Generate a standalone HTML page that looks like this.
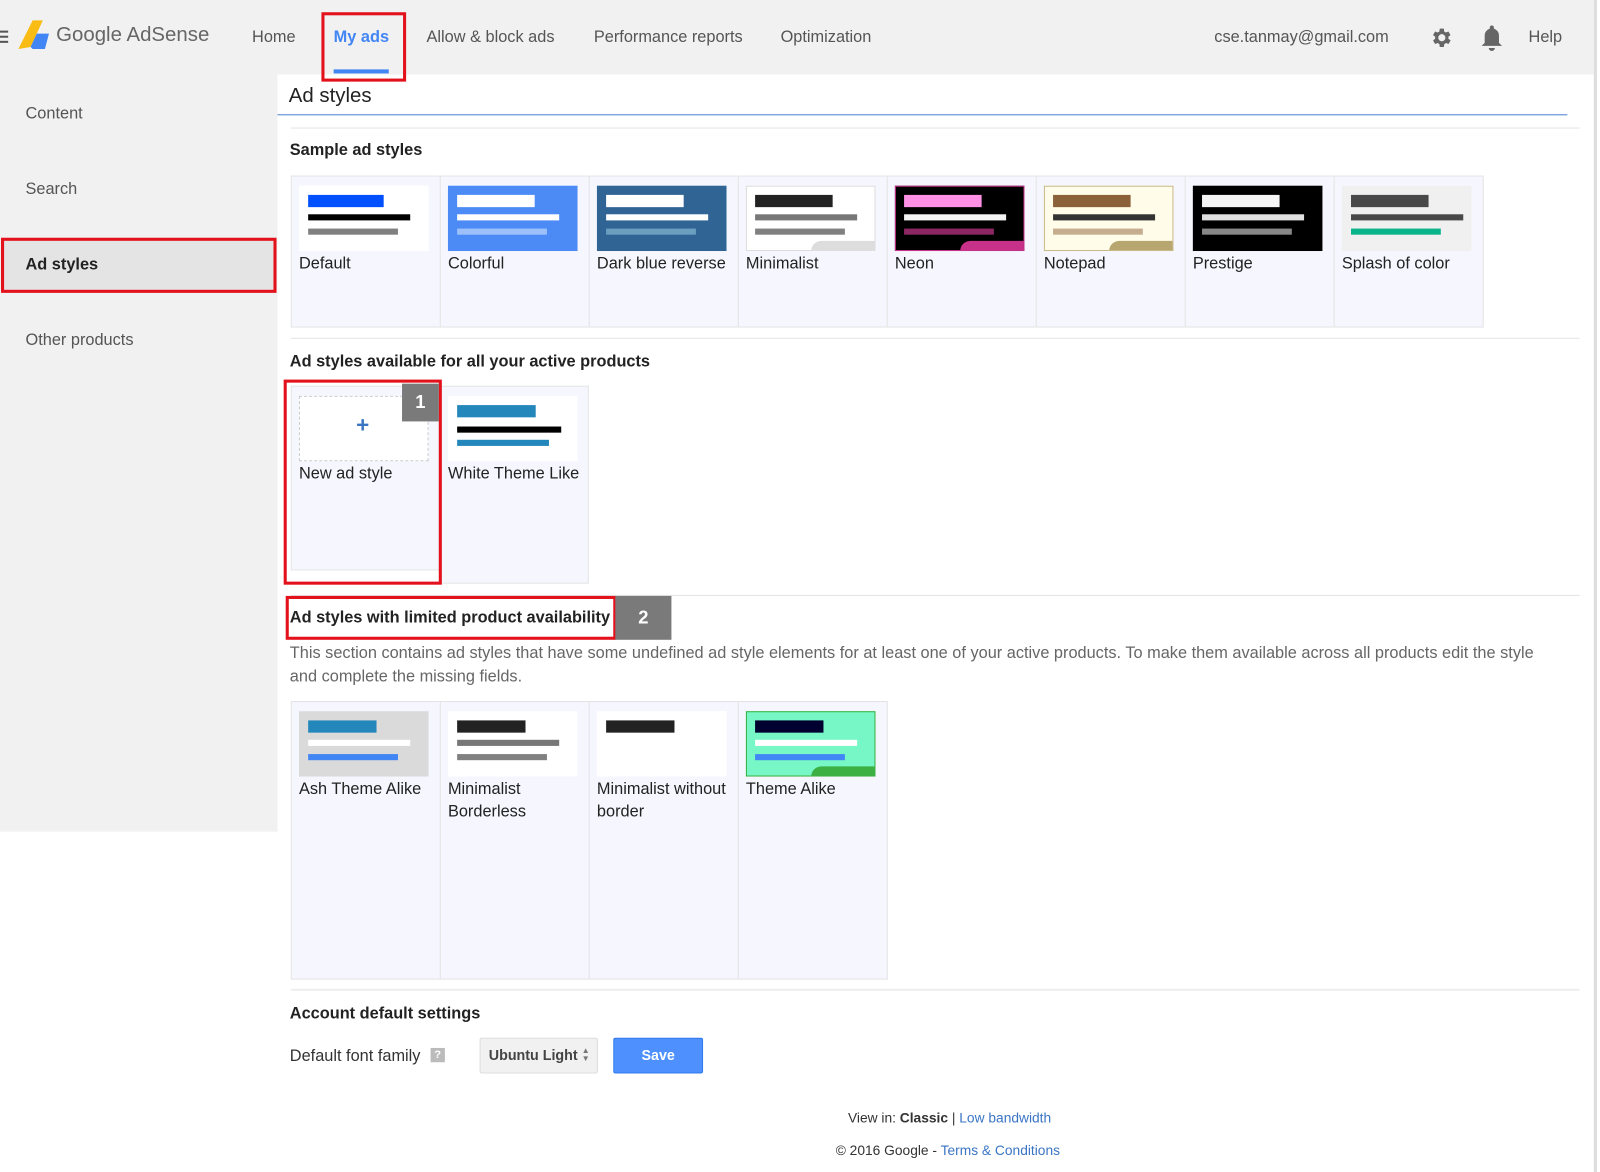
<!DOCTYPE html>
<html><head><meta charset="utf-8">
<style>
*{margin:0;padding:0;box-sizing:border-box}
html,body{width:1600px;height:1172px;overflow:hidden;background:#fff;font-family:"Liberation Sans",Arial,sans-serif}
#w{position:absolute;left:0;top:0;width:1568px;height:1149px;transform:scale(1.0204);transform-origin:0 0}
.a{position:absolute}
.t{position:absolute;white-space:nowrap}
.nav{font-size:16px;color:#555;top:28px}
.side{font-size:16px;color:#555;left:25px}
.card{position:absolute;background:#f6f7fe;border:1px solid #e4e4e4}
.th{position:absolute;left:7px;top:9px;width:127px;height:64px;overflow:hidden}
.b{position:absolute}
.lbl{position:absolute;left:7px;top:75px;font-size:16px;color:#222;line-height:22px}
.h{font-size:16px;font-weight:bold;color:#222}
.hr{position:absolute;height:1px;background:#e4e4e4}
</style></head><body><div id="w">
<!-- header -->
<div class="a" style="left:0;top:0;width:1562px;height:73px;background:#f1f1f1"></div>
<div class="a" style="left:0;top:30px;width:8px;height:2px;background:#555"></div>
<div class="a" style="left:0;top:35px;width:8px;height:2px;background:#555"></div>
<div class="a" style="left:0;top:40px;width:8px;height:2px;background:#555"></div>
<svg class="a" style="left:16px;top:18px" width="34" height="32" viewBox="0 0 34 32"><path d="M2 30 L16 2 L26 2 L14 28 Z" fill="#f9bc15"/><path d="M14 28 L20 15 L32 15 L28 30 L16 30 Z" fill="#4285f4"/></svg>
<div class="t" style="left:55px;top:23px;font-size:20px;color:#666">Google AdSense</div>
<div class="t nav" style="left:247px">Home</div>
<div class="t nav" style="left:327px;color:#4285f4;font-weight:bold">My ads</div>
<div class="a" style="left:327px;top:68px;width:54px;height:4px;background:#4285f4"></div>
<div class="a" style="left:315px;top:12px;width:83px;height:68px;border:3px solid #e3111b"></div>
<div class="t nav" style="left:418px">Allow &amp; block ads</div>
<div class="t nav" style="left:582px">Performance reports</div>
<div class="t nav" style="left:765px">Optimization</div>
<div class="t nav" style="left:1190px">cse.tanmay@gmail.com</div>
<svg class="a" style="left:1401px;top:25px" width="24" height="24" viewBox="0 0 24 24"><path fill="#666" d="M19.4 13a7.5 7.5 0 0 0 0-2l2.1-1.6-2-3.5-2.5 1a7 7 0 0 0-1.7-1L15 3h-4l-.4 2.9a7 7 0 0 0-1.7 1l-2.5-1-2 3.5L6.5 11a7.5 7.5 0 0 0 0 2l-2.1 1.6 2 3.5 2.5-1a7 7 0 0 0 1.7 1L11 21h4l.4-2.9a7 7 0 0 0 1.7-1l2.5 1 2-3.5zM13 15.5a3.5 3.5 0 1 1 0-7 3.5 3.5 0 0 1 0 7z" transform="translate(-1 0)"/></svg>
<svg class="a" style="left:1450px;top:23px" width="24" height="28" viewBox="0 0 24 28"><path fill="#666" d="M12 2a2 2 0 0 1 2 2v1a7 7 0 0 1 5 7v7l3 3H2l3-3v-7a7 7 0 0 1 5-7V4a2 2 0 0 1 2-2z M9 24h6a3 3 0 0 1-6 0z"/></svg>
<div class="t nav" style="left:1498px">Help</div>
<div class="a" style="left:1562px;top:0;width:3px;height:1149px;background:#ddd"></div>
<!-- sidebar -->
<div class="a" style="left:0;top:73px;width:272px;height:742px;background:#f1f1f1"></div>
<div class="t side" style="top:103px">Content</div>
<div class="t side" style="top:177px">Search</div>
<div class="a" style="left:1px;top:233px;width:270px;height:54px;background:#e4e4e4;border:3px solid #e3111b"></div>
<div class="t side" style="top:251px;color:#222;font-weight:bold">Ad styles</div>
<div class="t side" style="top:325px">Other products</div>
<!-- main -->
<div class="t" style="left:283px;top:83px;font-size:20px;color:#222">Ad styles</div>
<div class="a" style="left:272px;top:112px;width:1264px;height:1px;background:#4d7fd1"></div>
<div class="hr" style="left:285px;top:125px;width:1263px"></div>
<div class="t h" style="left:284px;top:139px">Sample ad styles</div>

<div class="card" style="left:285px;top:172px;width:147px;height:149px"><div class="th" style="background:#fff"><div class="b" style="left:9px;top:9px;width:74px;height:12px;background:#0050ff"></div><div class="b" style="left:9px;top:28px;width:100px;height:6px;background:#000"></div><div class="b" style="left:9px;top:42px;width:88px;height:6px;background:#808080"></div></div><div class="lbl">Default</div></div>
<div class="card" style="left:431px;top:172px;width:147px;height:149px"><div class="th" style="background:#4c8bf5"><div class="b" style="left:9px;top:9px;width:76px;height:12px;background:#fff"></div><div class="b" style="left:9px;top:28px;width:100px;height:6px;background:#fff"></div><div class="b" style="left:9px;top:42px;width:88px;height:6px;background:#9dc0fb"></div></div><div class="lbl">Colorful</div></div>
<div class="card" style="left:577px;top:172px;width:147px;height:149px"><div class="th" style="background:#2f6495"><div class="b" style="left:9px;top:9px;width:76px;height:12px;background:#fff"></div><div class="b" style="left:9px;top:28px;width:100px;height:6px;background:#fff"></div><div class="b" style="left:9px;top:42px;width:88px;height:6px;background:#6a9fbf"></div></div><div class="lbl">Dark blue reverse</div></div>
<div class="card" style="left:723px;top:172px;width:147px;height:149px"><div class="th" style="background:#fff;border:1px solid #ddd"><div class="b" style="left:8px;top:8px;width:76px;height:12px;background:#222"></div><div class="b" style="left:8px;top:27px;width:100px;height:6px;background:#777"></div><div class="b" style="left:8px;top:41px;width:88px;height:6px;background:#808080"></div><div class="b" style="left:63px;top:53px;width:70px;height:20px;background:#ddd;border-radius:10px 0 0 0"></div></div><div class="lbl">Minimalist</div></div>
<div class="card" style="left:869px;top:172px;width:147px;height:149px"><div class="th" style="background:#000;border:1px solid #c8318a"><div class="b" style="left:8px;top:8px;width:76px;height:12px;background:#ff90e5"></div><div class="b" style="left:8px;top:27px;width:100px;height:6px;background:#f4f4f4"></div><div class="b" style="left:8px;top:41px;width:88px;height:6px;background:#8c2764"></div><div class="b" style="left:63px;top:53px;width:70px;height:20px;background:#c8318a;border-radius:10px 0 0 0"></div></div><div class="lbl">Neon</div></div>
<div class="card" style="left:1015px;top:172px;width:147px;height:149px"><div class="th" style="background:#fffde9;border:1px solid #c9b988"><div class="b" style="left:8px;top:8px;width:76px;height:12px;background:#8a6138"></div><div class="b" style="left:8px;top:27px;width:100px;height:6px;background:#333"></div><div class="b" style="left:8px;top:41px;width:88px;height:6px;background:#c7ad90"></div><div class="b" style="left:63px;top:53px;width:70px;height:20px;background:#b7a66f;border-radius:10px 0 0 0"></div></div><div class="lbl">Notepad</div></div>
<div class="card" style="left:1161px;top:172px;width:147px;height:149px"><div class="th" style="background:#000"><div class="b" style="left:9px;top:9px;width:76px;height:12px;background:#f5f5f5"></div><div class="b" style="left:9px;top:28px;width:100px;height:6px;background:#e0e0e0"></div><div class="b" style="left:9px;top:42px;width:88px;height:6px;background:#888"></div></div><div class="lbl">Prestige</div></div>
<div class="card" style="left:1307px;top:172px;width:147px;height:149px"><div class="th" style="background:#f0f0f0"><div class="b" style="left:9px;top:9px;width:76px;height:12px;background:#484848"></div><div class="b" style="left:9px;top:28px;width:110px;height:6px;background:#484848"></div><div class="b" style="left:9px;top:42px;width:88px;height:6px;background:#0bb38a"></div></div><div class="lbl">Splash of color</div></div>

<div class="hr" style="left:285px;top:331px;width:1263px"></div>
<div class="t h" style="left:284px;top:346px">Ad styles available for all your active products</div>
<div class="card" style="left:285px;top:378px;width:147px;height:181px"><div class="th" style="background:#fff;border:1px dashed #ccc"><div class="t" style="left:55px;top:17px;font-size:22px;font-weight:bold;color:#3a75c4;line-height:22px">+</div></div><div class="lbl">New ad style</div></div>
<div class="card" style="left:431px;top:378px;width:146px;height:194px"><div class="th" style="background:#fff"><div class="b" style="left:9px;top:9px;width:77px;height:12px;background:#2487bb"></div><div class="b" style="left:9px;top:30px;width:102px;height:6px;background:#000"></div><div class="b" style="left:9px;top:43px;width:90px;height:6px;background:#2487bb"></div></div><div class="lbl">White Theme Like</div></div>
<div class="a" style="left:278px;top:372px;width:155px;height:201px;border:3px solid #e3111b"></div>
<div class="a" style="left:394px;top:376px;width:36px;height:37px;background:#7a7a7a;color:#fff;font-weight:bold;font-size:18px;text-align:center;line-height:37px">1</div>

<div class="hr" style="left:285px;top:583px;width:1263px"></div>
<div class="a" style="left:280px;top:584px;width:324px;height:43px;border:3px solid #e3111b"></div>
<div class="a" style="left:603px;top:584px;width:55px;height:43px;background:#7a7a7a;color:#fff;font-weight:bold;font-size:18px;text-align:center;line-height:43px">2</div>
<div class="t h" style="left:284px;top:597px">Ad styles with limited product availability</div>
<div class="a" style="left:284px;top:629px;width:1250px;font-size:16px;color:#666;line-height:23px">This section contains ad styles that have some undefined ad style elements for at least one of your active products. To make them available across all products edit the style and complete the missing fields.</div>

<div class="card" style="left:285px;top:687px;width:147px;height:273px"><div class="th" style="background:#dadada"><div class="b" style="left:9px;top:9px;width:67px;height:12px;background:#2487bb"></div><div class="b" style="left:9px;top:28px;width:100px;height:6px;background:#fff"></div><div class="b" style="left:9px;top:42px;width:88px;height:6px;background:#4285f4"></div></div><div class="lbl">Ash Theme Alike</div></div>
<div class="card" style="left:431px;top:687px;width:147px;height:273px"><div class="th" style="background:#fff"><div class="b" style="left:9px;top:9px;width:67px;height:12px;background:#222"></div><div class="b" style="left:9px;top:28px;width:100px;height:6px;background:#777"></div><div class="b" style="left:9px;top:42px;width:88px;height:6px;background:#808080"></div></div><div class="lbl">Minimalist<br>Borderless</div></div>
<div class="card" style="left:577px;top:687px;width:147px;height:273px"><div class="th" style="background:#fff"><div class="b" style="left:9px;top:9px;width:67px;height:12px;background:#222"></div></div><div class="lbl">Minimalist without<br>border</div></div>
<div class="card" style="left:723px;top:687px;width:147px;height:273px"><div class="th" style="background:#76f7c5;border:1px solid #3cb043"><div class="b" style="left:8px;top:8px;width:67px;height:12px;background:#000030"></div><div class="b" style="left:8px;top:27px;width:100px;height:6px;background:#fff"></div><div class="b" style="left:8px;top:41px;width:88px;height:6px;background:#4285f4"></div><div class="b" style="left:63px;top:53px;width:70px;height:20px;background:#3cb043;border-radius:10px 0 0 0"></div></div><div class="lbl">Theme Alike</div></div>

<div class="a" style="left:285px;top:969px;width:1263px;height:2px;background:#eee"></div>
<div class="t h" style="left:284px;top:985px">Account default settings</div>
<div class="t" style="left:284px;top:1027px;font-size:16px;color:#333">Default font family</div>
<div class="a" style="left:422px;top:1027px;width:14px;height:14px;background:#bbb;color:#fff;font-size:11px;font-weight:bold;text-align:center;line-height:14px">?</div>
<div class="a" style="left:470px;top:1017px;width:116px;height:35px;background:#f1f1f1;border:1px solid #ddd;border-radius:2px;font-size:14px;font-weight:bold;color:#444;line-height:33px;padding-left:8px">Ubuntu Light</div>
<div class="a" style="left:570px;top:1026px;font-size:8px;color:#777;line-height:8px">&#9650;<br>&#9660;</div>
<div class="a" style="left:601px;top:1017px;width:88px;height:35px;background:#4d90fe;border:1px solid #3079ed;border-radius:2px;color:#fff;font-size:14px;font-weight:bold;text-align:center;line-height:33px">Save</div>

<div class="t" style="left:831px;top:1088px;font-size:13.5px;color:#333">View in: <b>Classic</b> | <span style="color:#3a75c4">Low bandwidth</span></div>
<div class="t" style="left:819px;top:1120px;font-size:13.5px;color:#333">© 2016 Google - <span style="color:#3a75c4">Terms &amp; Conditions</span></div>
</div></body></html>
